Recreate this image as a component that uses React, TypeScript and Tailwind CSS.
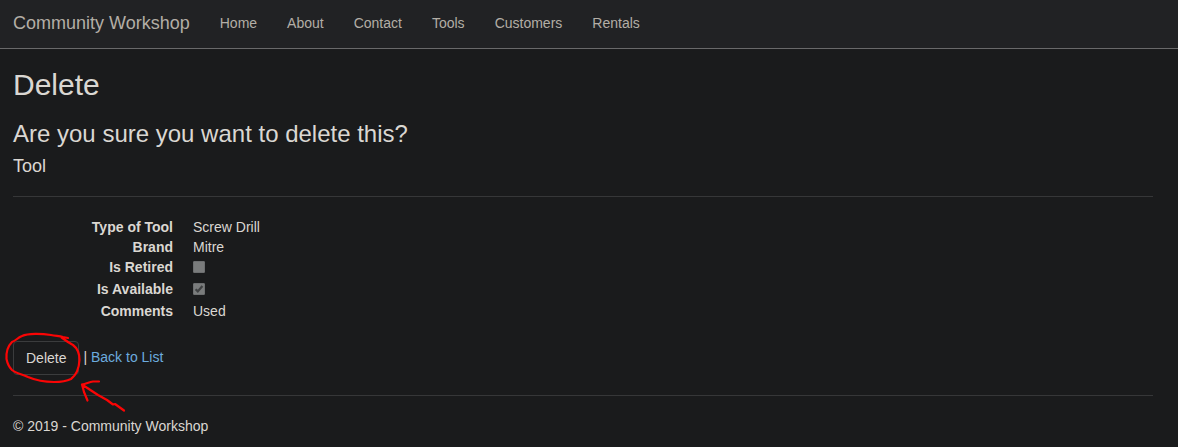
import React from "react";

const navLinks = ["Home", "About", "Contact", "Tools", "Customers", "Rentals"];

function CheckMark({ id, checked }: { id: string; checked: boolean }) {
  return (
    <span className="relative flex h-[22px] pt-1">
      <input
        id={id}
        type="checkbox"
        defaultChecked={checked}
        disabled
        className="size-3 appearance-none rounded-[1px] border border-[#6d6f70] bg-[#7a7c7c]"
      />
      {checked && (
        <svg className="pointer-events-none absolute left-0 top-1 size-3" viewBox="0 0 12 12" fill="none" aria-hidden="true">
          <path d="M2.6 6.2 4.8 8.4 9.4 3" stroke="#3f4142" strokeWidth="2.2" />
        </svg>
      )}
    </span>
  );
}

function Row({ term, htmlFor, children }: { term: string; htmlFor?: string; children: React.ReactNode }) {
  return (
    <div className="flex gap-5">
      <dt className="w-40 shrink-0 text-right font-bold">
        {htmlFor ? <label htmlFor={htmlFor}>{term}</label> : term}
      </dt>
      <dd>{children}</dd>
    </div>
  );
}

export default function App() {
  return (
    <div className="min-h-screen bg-[#1a1b1c] font-['Liberation_Sans',Arial,sans-serif] text-sm leading-5 text-[#dad7d2]">
      <header className="border-b border-[#69696a] bg-[#212224] text-[#b3aea6]">
        <nav className="flex h-12 items-center pb-0.5 pl-[13px]">
          <a href="#" className="mr-[15px] text-lg leading-5">
            Community Workshop
          </a>
          {navLinks.map((link) => (
            <a key={link} href="#" className="px-[15px]">
              {link}
            </a>
          ))}
        </nav>
      </header>

      <div className="pl-[13px] pr-[25px] pt-[19px]">
        <main>
          <h2 className="text-[30px] leading-[33px]">Delete</h2>
          <h3 className="mt-5 text-2xl leading-[26px]">Are you sure you want to delete this?</h3>
          <h4 className="mt-[9px] text-lg leading-5">Tool</h4>
          <hr className="my-5 border-[#363738]" />
          <dl className="mb-5">
            <Row term="Type of Tool">Screw Drill</Row>
            <Row term="Brand">Mitre</Row>
            <Row term="Is Retired" htmlFor="retired">
              <CheckMark id="retired" checked={false} />
            </Row>
            <Row term="Is Available" htmlFor="available">
              <CheckMark id="available" checked />
            </Row>
            <Row term="Comments">Used</Row>
          </dl>
          <form className="flex items-center gap-1" onSubmit={(e) => e.preventDefault()}>
            <div className="relative">
              <button type="submit" className="block rounded border border-[#3b3c3d] px-3 py-1.5">
                Delete
              </button>
              <svg
                className="pointer-events-none absolute -left-[13px] -top-4 h-[92px] w-[140px]"
                viewBox="0 325 140 92"
                fill="none"
                stroke="#fa0505"
                strokeWidth="2.2"
                strokeLinecap="round"
                strokeLinejoin="round"
                aria-hidden="true"
              >
                <path d="M68 338 L63 337 C59 336 56 336 51 335 C42 333.500 28 333 22 336 C17 338 17 340 12 342 C7 347 6 352 6.500 359 C7.500 364 9 367 12 370 C16 373.500 22 374 28 377 C35 380 44 382 54 382 C61 382 67 381 71 379 C75 376 79 369 79.500 360 C79.500 353 77 348 73 345 C69 343 65 340 63 338.500 L61.500 337.500" />
                <path d="M124 410.500 115 404 113 404.500 107 400 98 395 82 384.500 M99 381.500 H93 C89 382 86 384 82 384.500 L84 392 87.500 400.500" />
              </svg>
            </div>
            <span className="pb-0.5">
              | <a href="#" className="text-[#6cabdf]">Back to List</a>
            </span>
          </form>
          <hr className="my-5 border-[#363738]" />
        </main>
        <footer className="pb-[10px]">
          <p>© 2019 - Community Workshop</p>
        </footer>
      </div>
    </div>
  );
}
